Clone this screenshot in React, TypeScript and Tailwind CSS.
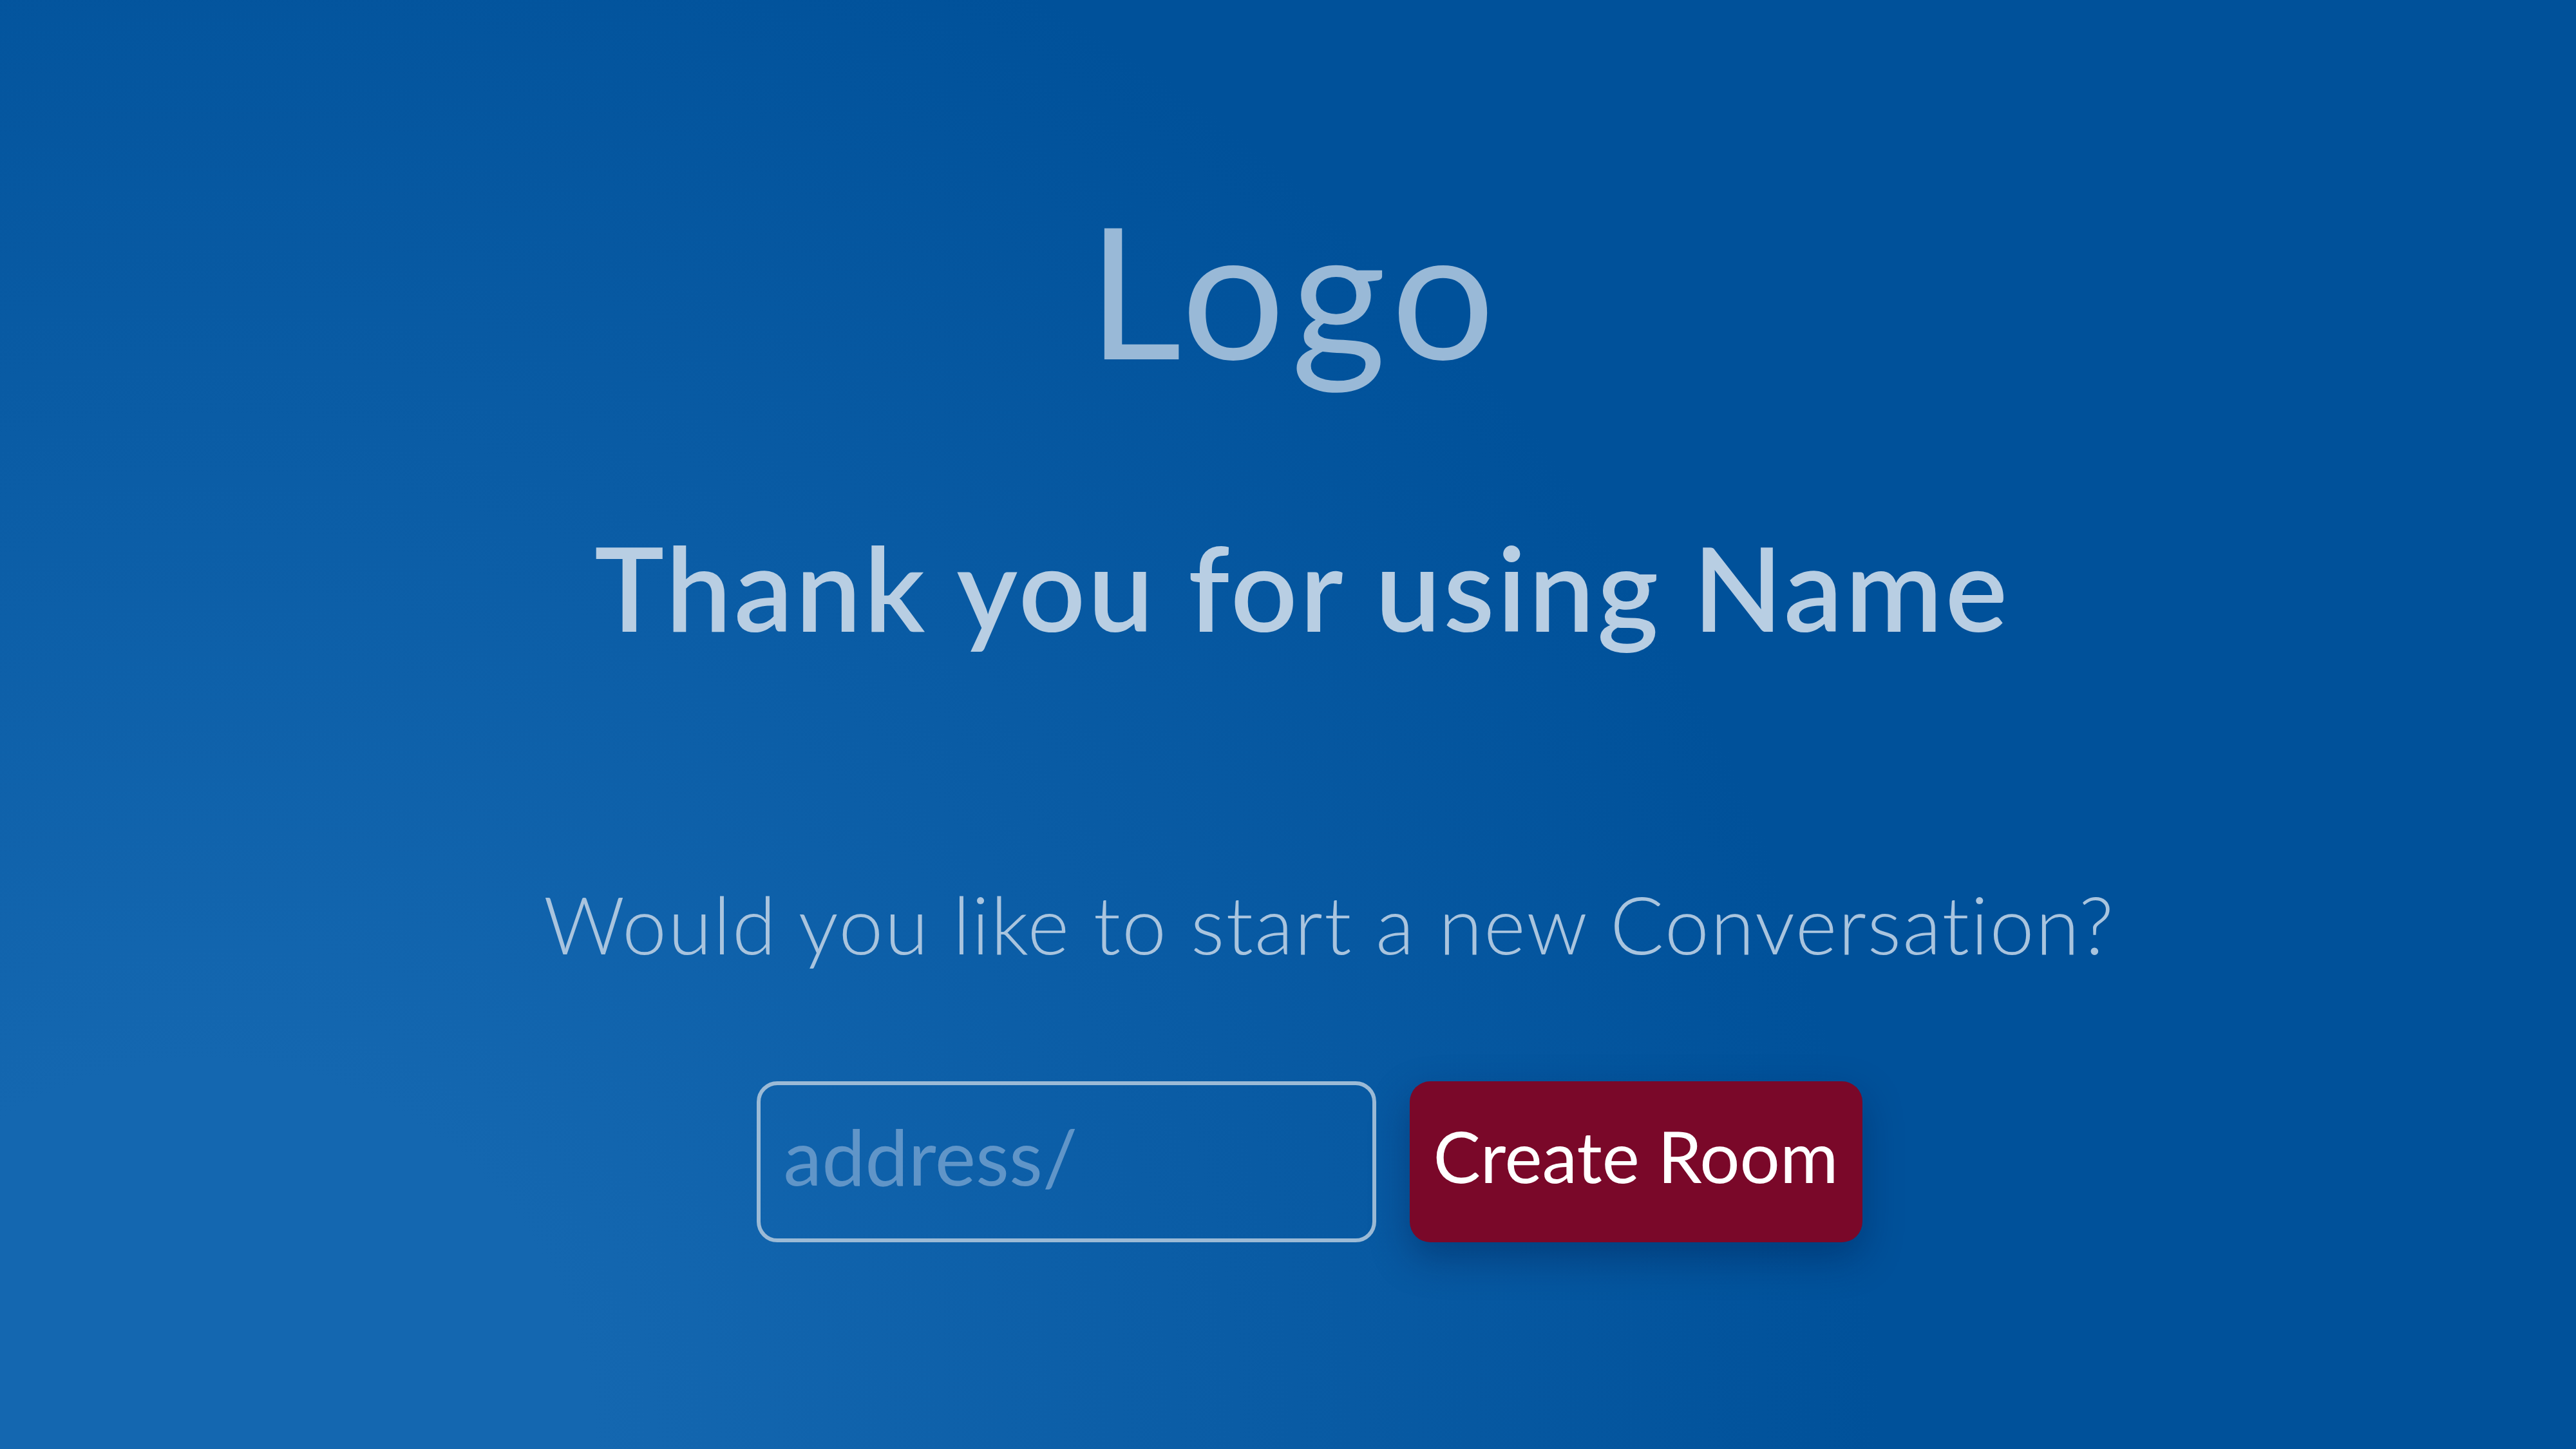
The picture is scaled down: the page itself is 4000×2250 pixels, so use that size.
export default function App() {
  return (
    <div
      className="flex h-[2250px] w-full flex-col items-center overflow-hidden bg-[radial-gradient(circle_at_8%_100%,#1467b0_0px,#1467b0_600px,#00519a_2600px)] text-[#99b9d7]"
      style={{ fontFamily: "Lato, 'Noto Sans', sans-serif" }}
    >
      <h1 className="pt-[306px] pl-[20px] text-[284px] font-normal leading-none tracking-[10px]">
        Logo
      </h1>

      <h2 className="mt-[230px] pl-[44px] text-[182px] font-semibold leading-none tracking-[4px] text-[#b8cee3]">
        Thank you for using Name
      </h2>

      <p className="mt-[370px] pl-[128px] text-[124px] font-light leading-none tracking-[2px] text-[#a9c4de]">
        Would you like to start a new Conversation?
      </p>

      <div className="mt-[183px] flex items-center gap-[52px] pl-[66px]">
        <input
          type="text"
          placeholder="address/"
          className="h-[250px] w-[962px] rounded-[32px] border-[6px] border-[#9bbad6] bg-transparent pb-[18px] pl-[36px] text-[120px] text-white outline-none placeholder:text-[#6095c8]"
        />
        <button className="h-[250px] w-[703px] rounded-[32px] bg-[#7a0829] pb-[20px] text-[110px] text-white shadow-[0_24px_60px_rgba(0,20,60,0.35)]">
          Create Room
        </button>
      </div>
    </div>
  );
}
